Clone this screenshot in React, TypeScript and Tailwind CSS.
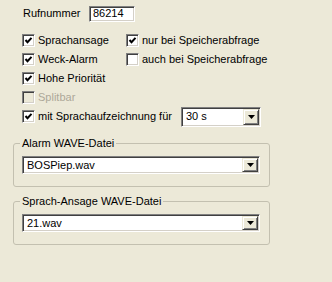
import type { ReactNode } from 'react'

const sunken =
  'border border-t-[#808080] border-l-[#808080] border-r-white border-b-white shadow-[inset_1px_1px_0_#404040,inset_-1px_-1px_0_#d4d0c8]'

function Check({ checked, disabled }: { checked?: boolean; disabled?: boolean }) {
  return (
    <span
      className={`relative block h-[13px] w-[13px] shrink-0 ${sunken} ${disabled ? 'bg-[#ece9d8]' : 'bg-white'}`}
    >
      {checked && (
        <svg width="13" height="13" viewBox="0 0 13 13" className="absolute -left-px -top-px">
          <polyline points="3.5,6 5.5,8.2 9.5,3.8" fill="none" stroke="#000" strokeWidth="2" />
        </svg>
      )}
    </span>
  )
}

function CheckRow({
  label,
  checked,
  disabled,
  children,
}: {
  label: string
  checked?: boolean
  disabled?: boolean
  children?: ReactNode
}) {
  return (
    <div className="flex h-[19px] items-center">
      <div className="flex w-[104px] items-center gap-[3px]">
        <Check checked={checked} disabled={disabled} />
        <span className={`whitespace-nowrap ${disabled ? 'text-[#aca899]' : 'text-black'}`}>{label}</span>
      </div>
      {children}
    </div>
  )
}

function Combo({ value, width, height }: { value: string; width: string; height: string }) {
  return (
    <div className={`flex items-center bg-white ${sunken} ${width} ${height}`}>
      <span className="flex-1 pl-[4px] text-black">{value}</span>
      <span className="mr-[1px] flex h-[calc(100%-2px)] w-[16px] items-center justify-center border border-t-[#ece9d8] border-l-[#ece9d8] border-r-[#404040] border-b-[#404040] bg-[#ece9d8] shadow-[inset_1px_1px_0_#fff,inset_-1px_-1px_0_#808080]">
        <svg width="7" height="4" viewBox="0 0 7 4">
          <polygon points="0,0 7,0 3.5,4" fill="#000" />
        </svg>
      </span>
    </div>
  )
}

function Group({ title, value, className }: { title: string; value: string; className: string }) {
  return (
    <fieldset
      className={`ml-[13px] w-[257px] rounded-[3px] border border-[#c3c0b0] pt-[6px] pb-[12px] pl-[8px] ${className}`}
    >
      <legend className="ml-[-2px] px-[2px] leading-[13px]">{title}</legend>
      <Combo value={value} width="w-[238px]" height="h-[18px]" />
    </fieldset>
  )
}

export default function App() {
  return (
    <div className="h-[282px] w-[332px] bg-[#ece9d8] pt-[5px] text-[11px] leading-[13px] text-black [font-family:'Liberation_Sans',Arial,sans-serif]">
      <div className="flex h-[17px] items-center pl-[23px]">
        <span className="w-[66px]">Rufnummer</span>
        <div className={`flex h-[16px] w-[46px] items-center bg-white pl-[3px] ${sunken}`}>86214</div>
      </div>

      <div className="mt-[9px] pl-[22px]">
        <CheckRow label="Sprachansage" checked>
          <div className="flex items-center gap-[3px]">
            <Check checked />
            <span>nur bei Speicherabfrage</span>
          </div>
        </CheckRow>
        <CheckRow label="Weck-Alarm" checked>
          <div className="flex items-center gap-[3px]">
            <Check />
            <span>auch bei Speicherabfrage</span>
          </div>
        </CheckRow>
        <CheckRow label="Hohe Priorität" checked />
        <CheckRow label="Splitbar" disabled />
        <div className="flex h-[19px] items-center">
          <div className="flex w-[159px] items-center gap-[3px]">
            <Check checked />
            <span className="whitespace-nowrap">mit Sprachaufzeichnung für</span>
          </div>
          <Combo value="30 s" width="w-[80px]" height="h-[20px]" />
        </div>
      </div>

      <Group title="Alarm WAVE-Datei" value="BOSPiep.wav" className="mt-[11px]" />
      <Group title="Sprach-Ansage WAVE-Datei" value="21.wav" className="mt-[8px]" />
    </div>
  )
}
